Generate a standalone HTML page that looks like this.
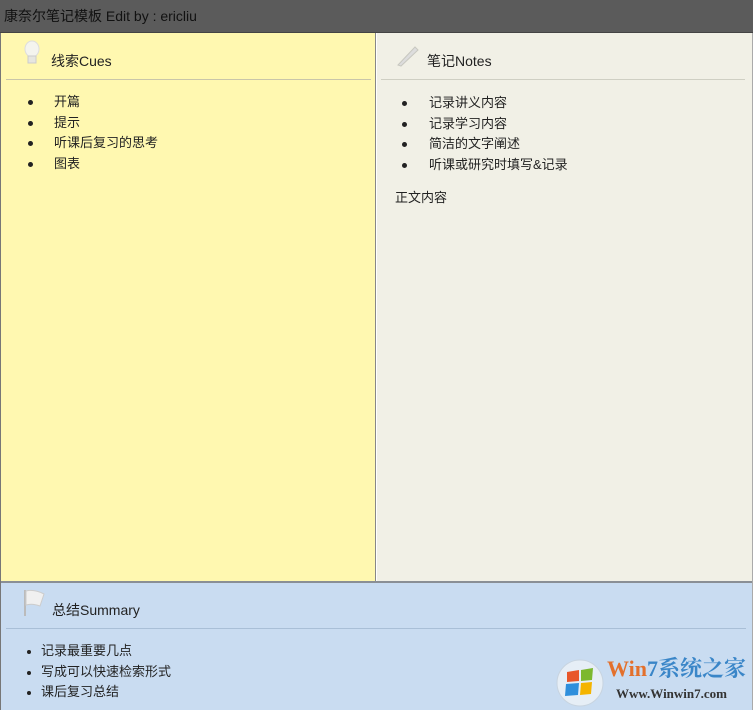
<!DOCTYPE html>
<html><head><meta charset="utf-8"><style>
*{margin:0;padding:0;box-sizing:border-box}
body{width:753px;height:710px;overflow:hidden;background:#fff;font-family:"Liberation Sans","Noto Sans CJK SC",sans-serif;font-size:13px;color:#222;position:relative}
.title{position:absolute;left:0;top:0;width:753px;height:33px;background:#5b5b5b;border-bottom:1px solid #444;color:#111;font-size:14px;line-height:33px;padding-left:4px}
.p{position:absolute}
.l{left:1px;top:33px;width:375px;height:548px;background:#fff8b0;border-right:1px solid #888}
.r{left:377px;top:33px;width:375px;height:548px;background:#f1f0e6}
.b{left:1px;top:581px;width:751px;height:129px;background:#c9dcf1;border-top:2px solid #8a8f95}
.frame{position:absolute;left:0;top:33px;width:1px;height:677px;background:#777}
.frame2{position:absolute;right:0;top:33px;width:1px;height:677px;background:#aaa}
.hd{position:absolute;font-size:14px}
.hr{position:absolute;height:1px;background:#c9c6a9}
.t{position:absolute;line-height:20.5px}
.dot{position:absolute;width:5px;height:5px;border-radius:50%;background:#222}
</style></head><body>
<div class="title">康奈尔笔记模板 Edit by : ericliu</div>
<div class="p l"></div><div class="p r"></div><div class="p b"></div>
<div class="frame"></div><div class="frame2"></div>

<svg style="position:absolute;left:22px;top:40px" width="20" height="26"><ellipse cx="10" cy="9" rx="7" ry="8" fill="#f4f4ee" stroke="#ddd"/><rect x="6" y="16" width="8" height="7" fill="#e6e6e0" stroke="#ccc"/></svg>
<div class="hd" style="left:51px;top:51px">线索Cues</div>
<div class="hr" style="left:6px;top:79px;width:365px"></div>
<div class="dot" style="left:28px;top:100px"></div><div class="t" style="left:54px;top:92px">开篇</div>
<div class="dot" style="left:28px;top:121px"></div><div class="t" style="left:54px;top:113px">提示</div>
<div class="dot" style="left:28px;top:141px"></div><div class="t" style="left:54px;top:133px">听课后复习的思考</div>
<div class="dot" style="left:28px;top:162px"></div><div class="t" style="left:54px;top:154px">图表</div>

<svg style="position:absolute;left:396px;top:44px" width="24" height="24"><path d="M2 21 L19 3 L22 6 L5 22 Z" fill="#ddd" stroke="#c8c8c0"/></svg>
<div class="hd" style="left:427px;top:51px">笔记Notes</div>
<div class="hr" style="left:381px;top:79px;width:364px;background:#cfcfc3"></div>
<div class="dot" style="left:402px;top:101px"></div><div class="t" style="left:429px;top:93px">记录讲义内容</div>
<div class="dot" style="left:402px;top:122px"></div><div class="t" style="left:429px;top:114px">记录学习内容</div>
<div class="dot" style="left:402px;top:142px"></div><div class="t" style="left:429px;top:134px">简洁的文字阐述</div>
<div class="dot" style="left:402px;top:163px"></div><div class="t" style="left:429px;top:155px">听课或研究时填写&amp;记录</div>
<div class="t" style="left:395px;top:188px">正文内容</div>

<svg style="position:absolute;left:22px;top:588px" width="26" height="30"><path d="M3 2 L3 28" stroke="#bbb" stroke-width="2"/><path d="M4 3 Q12 1 22 6 L18 18 Q10 15 4 17 Z" fill="#f0f0f0" stroke="#ccc"/></svg>
<div class="hd" style="left:52px;top:600px">总结Summary</div>
<div class="hr" style="left:6px;top:628px;width:740px;background:#a9bfd7"></div>
<div class="dot" style="left:27px;top:650px;width:4px;height:4px"></div><div class="t" style="left:41px;top:641px">记录最重要几点</div>
<div class="dot" style="left:27px;top:671px;width:4px;height:4px"></div><div class="t" style="left:41px;top:662px">写成可以快速检索形式</div>
<div class="dot" style="left:27px;top:691px;width:4px;height:4px"></div><div class="t" style="left:41px;top:682px">课后复习总结</div>

<svg style="position:absolute;left:555px;top:658px" width="50" height="50"><circle cx="25" cy="25" r="23" fill="#e6eef6" stroke="#c8d4e0"/><path d="M12 14 L24 12 L24 23 L12 24Z" fill="#e8562a"/><path d="M26 12 L38 10 L37 22 L26 23Z" fill="#7cb82f"/><path d="M11 26 L24 25 L23 37 L10 38Z" fill="#2f8fdc"/><path d="M26 25 L37 24 L36 36 L25 37Z" fill="#f4b400"/></svg>
<div style="position:absolute;left:607px;top:657px;font-size:22px;font-weight:bold;line-height:24px;font-family:'Liberation Serif','Noto Serif CJK SC',serif"><span style="color:#e3702c">Win</span><span style="color:#3a86c8">7</span><span style="color:#3a86c8">系统之家</span></div>
<div style="position:absolute;left:616px;top:686px;font-size:13px;font-weight:bold;color:#333;font-family:'Liberation Serif',serif">Www.Winwin7.com</div>
</body></html>
